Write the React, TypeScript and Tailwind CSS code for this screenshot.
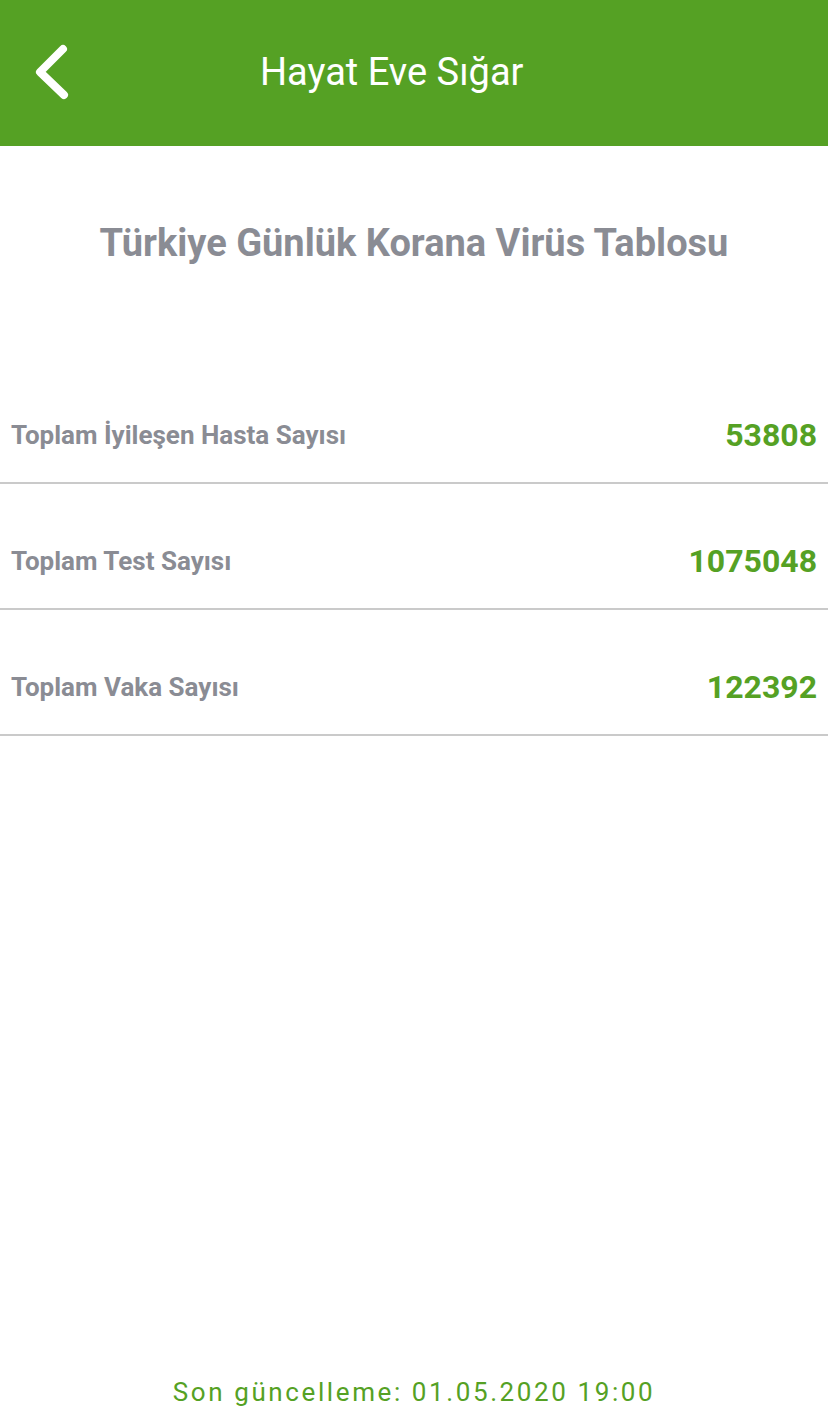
const stats = [
  { label: "Toplam İyileşen Hasta Sayısı", value: "53808" },
  { label: "Toplam Test Sayısı", value: "1075048" },
  { label: "Toplam Vaka Sayısı", value: "122392" },
];

function BackIcon() {
  return (
    <svg width="40" height="60" viewBox="0 0 40 60" fill="none" aria-hidden>
      <path
        d="M33 7 L10 30 L34 53"
        stroke="white"
        strokeWidth="8"
        strokeLinecap="round"
        strokeLinejoin="round"
      />
    </svg>
  );
}

export default function App() {
  return (
    <div className="flex min-h-[1408px] w-full flex-col bg-white font-['Roboto',sans-serif]">
      <header className="flex h-[146px] items-center bg-[#55a124] pb-[2px] pl-[30px]">
        <BackIcon />
        <h1 className="ml-[190px] text-[38px] leading-none text-white">Hayat Eve Sığar</h1>
      </header>

      <h2 className="mt-[74px] text-center text-[38px] font-bold leading-[46px] text-[#8a8c94]">
        Türkiye Günlük Korana Virüs Tablosu
      </h2>

      <div className="mt-[92px]">
        {stats.map((s) => (
          <div
            key={s.label}
            className="flex h-[126px] items-center justify-between border-b-2 border-[#cacaca] pl-[11px] pr-[11px] pt-[30px]"
          >
            <span className="text-[26px] font-bold text-[#8a8c94]">{s.label}</span>
            <span className="text-[32px] font-bold text-[#55a124]">{s.value}</span>
          </div>
        ))}
      </div>

      <footer className="mt-auto text-center text-[26px] leading-[32px] tracking-[2.6px] text-[#55a124]">
        Son güncelleme: 01.05.2020 19:00
      </footer>
    </div>
  );
}
